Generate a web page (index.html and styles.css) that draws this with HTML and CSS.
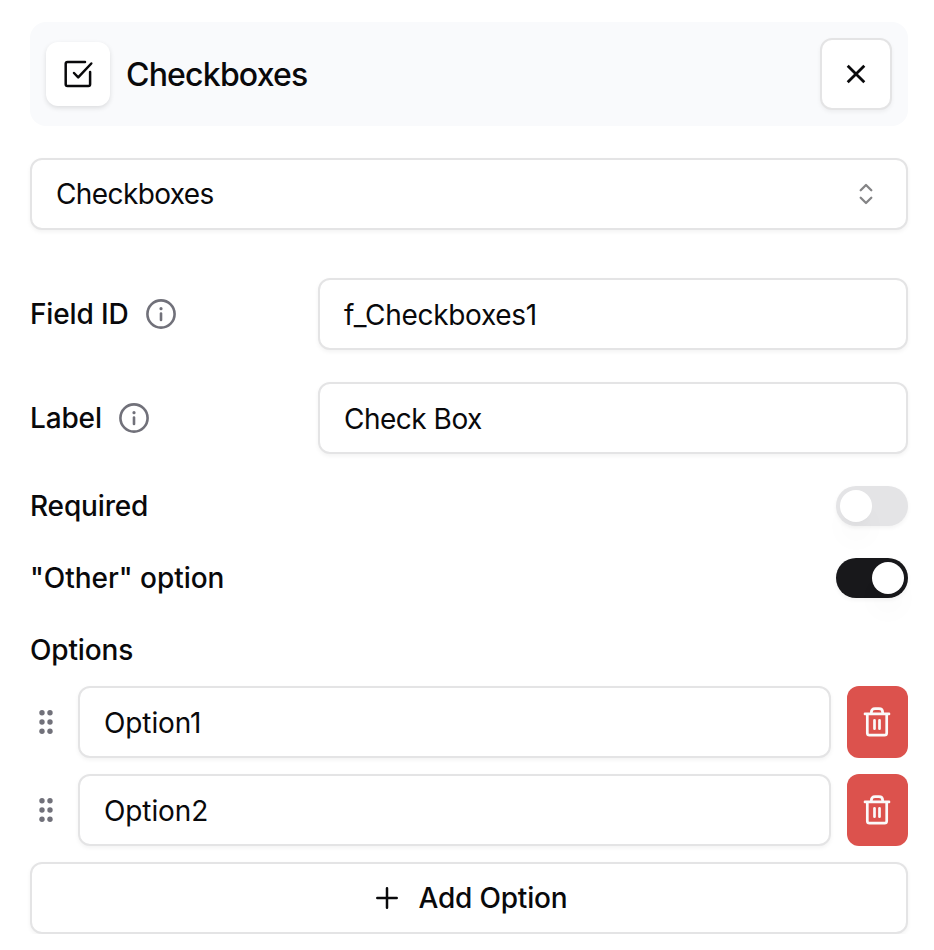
FILE: index.html
```
<!DOCTYPE html>
<html lang="en">
<head>
<meta charset="utf-8">
<title>Checkboxes</title>
<link rel="stylesheet" href="styles.css">
</head>
<body>
<main class="panel">
  <header class="header">
    <span class="tile"><svg width="32" height="32" viewBox="0 0 32 32"><path d="M23 3.900H5.500Q3.700 3.900 3.700 5.700V26.300Q3.700 28.100 5.500 28.100H26.300Q28.100 28.100 28.100 26.300V14M12 15 16.200 19.300 29.300 5.500"/></svg></span>
    <h1 class="title">Checkboxes</h1>
    <button class="box close" aria-label="Close"><svg width="30" height="30" viewBox="0 0 30 30"><path d="m6.700 6.700 16.600 16.600M23.300 6.700 6.700 23.300"/></svg></button>
  </header>
  <div class="box select"><span class="value">Checkboxes</span><svg class="caret" width="32" height="32" viewBox="0 0 32 32"><path d="m10.700 12.300 5.300-5.300 5.300 5.300M10.700 19.700l5.300 5.300 5.300-5.300"/></svg></div>
  <div class="field first">
    <span class="label">Field ID</span>
    <svg class="info" width="32" height="32" viewBox="0 0 32 32"><circle cx="16" cy="16" r="13.600"/><path d="M16 15.600v6.400"/><circle class="dot" cx="16" cy="10.700" r="1.600"/></svg>
    <div class="box input field-id">f_Checkboxes1</div>
  </div>
  <div class="field">
    <span class="label">Label</span>
    <svg class="info" width="32" height="32" viewBox="0 0 32 32"><circle cx="16" cy="16" r="13.600"/><path d="M16 15.600v6.400"/><circle class="dot" cx="16" cy="10.700" r="1.600"/></svg>
    <div class="box input field-label">Check Box</div>
  </div>
  <div class="toggle"><span class="label">Required</span><span class="switch"><span class="thumb"></span></span></div>
  <div class="toggle"><span class="label wide">"Other" option</span><span class="switch on"><span class="thumb"></span></span></div>
  <h2 class="label options">Options</h2>
  <div class="option">
    <svg class="grip" width="32" height="32" viewBox="0 0 32 32"><circle cx="12" cy="6.700" r="2.700"/><circle cx="20" cy="6.700" r="2.700"/><circle cx="12" cy="16" r="2.700"/><circle cx="20" cy="16" r="2.700"/><circle cx="12" cy="25.300" r="2.700"/><circle cx="20" cy="25.300" r="2.700"/></svg>
    <div class="box input">Option1</div>
    <button class="delete" aria-label="Delete"><svg width="32" height="32" viewBox="0 0 32 32"><path d="M4 7.900h24M10.300 7.900V6.500Q10.300 2.700 14 2.700h4Q21.700 2.700 21.700 6.500v1.400M6.300 7.900V27Q6.300 29.200 8.500 29.200h15Q25.700 29.200 25.700 27V7.900M13.500 14.300v8.400M18.500 14.300v8.400"/></svg></button>
  </div>
  <div class="option">
    <svg class="grip" width="32" height="32" viewBox="0 0 32 32"><circle cx="12" cy="6.700" r="2.700"/><circle cx="20" cy="6.700" r="2.700"/><circle cx="12" cy="16" r="2.700"/><circle cx="20" cy="16" r="2.700"/><circle cx="12" cy="25.300" r="2.700"/><circle cx="20" cy="25.300" r="2.700"/></svg>
    <div class="box input">Option2</div>
    <button class="delete" aria-label="Delete"><svg width="32" height="32" viewBox="0 0 32 32"><path d="M4 7.900h24M10.300 7.900V6.500Q10.300 2.700 14 2.700h4Q21.700 2.700 21.700 6.500v1.400M6.300 7.900V27Q6.300 29.200 8.500 29.200h15Q25.700 29.200 25.700 27V7.900M13.500 14.300v8.400M18.500 14.300v8.400"/></svg></button>
  </div>
  <button class="box add"><svg width="32" height="32" viewBox="0 0 32 32"><path d="M6.300 16h19.400M16 6.300v19.400"/></svg><span>Add Option</span></button>
</main>
</body>
</html>
```
FILE: styles.css
```
* { box-sizing: border-box; }
body {
  margin: 0;
  background: #fff;
  color: #09090b;
  font: 400 28px/40px Inter, sans-serif;
}
button { font: inherit; color: inherit; padding: 0; margin: 0; }
svg {
  display: block;
  flex: none;
  fill: none;
  stroke: currentColor;
  stroke-width: 2.5;
  stroke-linecap: round;
  stroke-linejoin: round;
}
.panel {
  display: flex;
  flex-direction: column;
  width: 878px;
  margin-left: 30px;
  padding-top: 22px;
}
.box {
  display: flex;
  align-items: center;
  height: 72px;
  border: 2px solid #e4e4e5;
  border-radius: 12px;
  background: #fff;
  box-shadow: 0 2px 4px rgba(0, 0, 0, .05);
}
.header {
  display: flex;
  align-items: center;
  height: 104px;
  padding: 0 16px;
  border-radius: 16px;
  background: #f9fafc;
}
.tile {
  display: grid;
  place-items: center;
  width: 64px;
  height: 64px;
  border-radius: 12px;
  background: #fff;
  box-shadow: 0 2px 5px rgba(0, 0, 0, .12);
}
.title {
  margin: 0 0 0 16px;
  padding-top: 2px;
  font-size: 32px;
  font-weight: 550;
  letter-spacing: -.8px;
}
.close {
  justify-content: center;
  width: 72px;
  margin-left: auto;
}
.close svg { stroke-width: 2.8; stroke-linecap: butt; }
.select {
  justify-content: space-between;
  margin-top: 32px;
  padding: 0 24px;
}
.value { letter-spacing: -.6px; }
.caret { stroke: #848486; stroke-width: 2.3; }
.field { display: flex; align-items: center; margin-top: 32px; }
.first { margin-top: 48px; }
.label { font-size: 28px; font-weight: 530; letter-spacing: -.15px; }
.wide { letter-spacing: -.03px; }
.info { margin-left: 16px; color: #71717a; stroke-width: 2.6; }
.first .info { margin-left: 17px; }
.info .dot { fill: currentColor; stroke: none; }
.field .input { width: 590px; margin-left: auto; }
.input { padding: 2px 24px 0; letter-spacing: -.1px; }
.field-id { letter-spacing: -.3px; }
.field-label { letter-spacing: -.5px; }
.toggle {
  display: flex;
  align-items: center;
  justify-content: space-between;
  height: 40px;
  margin-top: 32px;
}
.switch {
  display: flex;
  width: 72px;
  height: 40px;
  padding: 4px;
  border-radius: 20px;
  background: #e4e4e6;
  box-shadow: 0 2px 4px rgba(0, 0, 0, .05);
}
.on { justify-content: flex-end; background: #18181b; }
.thumb {
  width: 32px;
  height: 32px;
  border-radius: 50%;
  background: #fff;
  box-shadow: 0 20px 30px -6px rgba(0, 0, 0, .06), 0 8px 12px -8px rgba(0, 0, 0, .06);
}
.options { margin: 32px 0 0; }
.option { display: flex; align-items: center; gap: 16px; margin-top: 16px; }
.option .input { flex: 1; }
.grip { fill: #71717a; stroke: none; }
.delete {
  display: flex;
  align-items: center;
  padding-left: 14px;
  width: 61px;
  height: 72px;
  border: 0;
  border-radius: 12px;
  background: #dc524d;
  color: #fafafa;
}
.delete svg { stroke-width: 2.7; }
.add {
  justify-content: center;
  gap: 16px;
  margin-top: 16px;
  font-weight: 530;
  letter-spacing: -.2px;
}
```
